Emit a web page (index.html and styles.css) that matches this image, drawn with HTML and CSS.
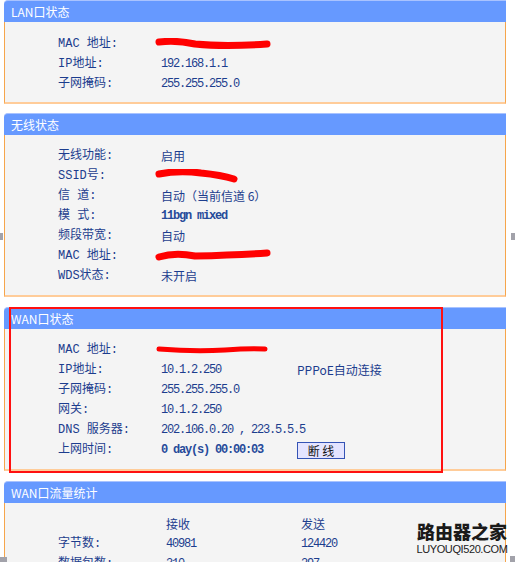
FILE: index.html
```html
<!DOCTYPE html>
<html lang="zh-CN">
<head>
    <meta charset="UTF-8">
    <meta name="viewport" content="width=device-width, initial-scale=1.0">
    <title>运行状态</title>
    <link rel="stylesheet" href="styles.css">
</head>
<body>

<div class="page">

    <div class="panel panel-lan">
        <div class="panel-title">LAN口状态</div>
        <div class="panel-body">
            <div class="row">
                <span class="lbl">MAC 地址:</span>
                <span class="val"><svg class="redact" width="118" height="12" viewBox="0 0 118 12"><path d="M4 4 Q22 2 40 6 Q70 9 112 6" /></svg></span>
            </div>
            <div class="row">
                <span class="lbl">IP地址:</span>
                <span class="val num">192.168.1.1</span>
            </div>
            <div class="row">
                <span class="lbl">子网掩码:</span>
                <span class="val num">255.255.255.0</span>
            </div>
        </div>
    </div>

    <div class="panel panel-wlan">
        <div class="panel-title">无线状态</div>
        <div class="panel-body">
            <div class="row">
                <span class="lbl">无线功能:</span>
                <span class="val">启用</span>
            </div>
            <div class="row">
                <span class="lbl">SSID号:</span>
                <span class="val"><svg class="redact" width="84" height="14" viewBox="0 0 84 14"><path d="M4 5 Q24 1 46 4 Q66 6 79 10" /></svg></span>
            </div>
            <div class="row">
                <span class="lbl">信 道:</span>
                <span class="val">自动（当前信道 6）</span>
            </div>
            <div class="row">
                <span class="lbl">模 式:</span>
                <span class="val num mode">11bgn mixed</span>
            </div>
            <div class="row">
                <span class="lbl">频段带宽:</span>
                <span class="val">自动</span>
            </div>
            <div class="row">
                <span class="lbl">MAC 地址:</span>
                <span class="val"><svg class="redact" width="118" height="14" viewBox="0 0 118 14"><path d="M4 8 Q20 3 40 7 Q80 6 112 4" /></svg></span>
            </div>
            <div class="row">
                <span class="lbl">WDS状态:</span>
                <span class="val">未开启</span>
            </div>
        </div>
    </div>

    <div class="panel panel-wan">
        <div class="panel-title">WAN口状态</div>
        <div class="panel-body">
            <div class="row">
                <span class="lbl">MAC 地址:</span>
                <span class="val"><svg class="redact thin" width="116" height="10" viewBox="0 0 116 10"><path d="M4 4 Q40 7 70 5 Q95 3 110 4" /></svg></span>
            </div>
            <div class="row">
                <span class="lbl">IP地址:</span>
                <span class="val num">10.1.2.250</span>
                <span class="extra">PPPoE自动连接</span>
            </div>
            <div class="row">
                <span class="lbl">子网掩码:</span>
                <span class="val num">255.255.255.0</span>
            </div>
            <div class="row">
                <span class="lbl">网关:</span>
                <span class="val num">10.1.2.250</span>
            </div>
            <div class="row">
                <span class="lbl">DNS 服务器:</span>
                <span class="val num wide">202.106.0.20 , 223.5.5.5</span>
            </div>
            <div class="row">
                <span class="lbl">上网时间:</span>
                <span class="val num mode">0 day(s) 00:00:03</span>
                <span class="extra"><button class="btn">断 线</button></span>
            </div>
        </div>
        <div class="highlight"></div>
    </div>

    <div class="panel panel-stats">
        <div class="panel-title">WAN口流量统计</div>
        <div class="panel-body">
            <div class="stat-row">
                <span class="lbl"></span>
                <span class="head">接收</span>
                <span class="head">发送</span>
            </div>
            <div class="stat-row">
                <span class="lbl">字节数:</span>
                <span class="num">40981</span>
                <span class="num">124420</span>
            </div>
            <div class="stat-row">
                <span class="lbl">数据包数:</span>
                <span class="num">310</span>
                <span class="num">297</span>
            </div>
        </div>
    </div>

    <div class="watermark">
        <div class="wm-cn">路由器之家</div>
        <div class="wm-en">LUYOUQI520.COM</div>
    </div>

    <span class="scroll-mark mark-left"></span>
    <span class="scroll-mark mark-right"></span>
    <span class="scroll-mark mark-bl"></span>
    <span class="scroll-mark mark-br"></span>
</div>

</body>
</html>
```

FILE: styles.css
```css
html, body {
    margin: 0;
    height: 100%;
    overflow: hidden;
}

body {
    font-family: "Liberation Mono", "Noto Sans CJK SC", monospace;
    font-size: 12px;
    color: #1c3d8e;
    background-color: #ffffff;
}

.page {
    position: relative;
    height: 562px;
    padding: 0 9px 0 4px;
}

.panel {
    margin-bottom: 10px;
}

.panel-lan {
    margin-bottom: 9px;
}

.panel-title {
    height: 21px;
    line-height: 21px;
    border-top: 1px solid #a9c3ff;
    border-top-left-radius: 4px;
    background-color: #6699ff;
    color: #ffffff;
    padding-left: 7px;
    font-family: "Noto Sans CJK SC", sans-serif;
    font-size: 12px;
}

.panel-body {
    background-color: #f4f4f4;
    border-left: 1px solid #f6a54b;
    border-right: 1px solid #f6a54b;
    border-bottom: 2px solid #ffcc99;
    padding: 11px 0 9px 53px;
}

.panel-lan .panel-body {
    padding: 12px 0 8px 53px;
}

.row {
    display: grid;
    grid-template-columns: 103px 136px auto;
    height: 20px;
    line-height: 20px;
    align-items: center;
}

.lbl {
    font-family: "Liberation Mono", "Noto Sans CJK SC", monospace;
    white-space: nowrap;
}

.val {
    white-space: nowrap;
    font-family: "Noto Sans CJK SC", sans-serif;
}

.num {
    font-family: "Liberation Mono", monospace;
    letter-spacing: -1.2px;
    white-space: nowrap;
}

.mode {
    font-weight: bold;
    color: #264a9a;
}

.extra {
    font-family: "Noto Sans CJK SC", sans-serif;
    white-space: nowrap;
}

/* red scribbles over the hidden MAC / SSID values */
.redact {
    display: block;
    margin-left: -6px;
}

.redact path {
    fill: none;
    stroke: #ff0000;
    stroke-width: 7;
    stroke-linecap: round;
}

.redact.thin path {
    stroke-width: 5;
}

.btn {
    display: block;
    width: 48px;
    height: 17px;
    padding: 0;
    margin-top: 1px;
    background-color: #e4e4ff;
    border: 1px solid #3453b5;
    color: #111111;
    font-family: "Noto Sans CJK SC", sans-serif;
    font-size: 12px;
    line-height: 15px;
}

.panel-wan {
    position: relative;
}

.highlight {
    position: absolute;
    left: 5px;
    top: 0;
    width: 430px;
    height: 162px;
    border: 2px solid #ff1010;
}

.stat-row {
    display: grid;
    grid-template-columns: 108px 135px auto;
    height: 20px;
    line-height: 20px;
}

.head {
    font-family: "Noto Sans CJK SC", sans-serif;
}

.watermark {
    position: absolute;
    left: 414px;
    top: 520px;
    width: 96px;
    text-align: center;
}

.wm-cn {
    font-family: "Noto Sans CJK SC", sans-serif;
    font-weight: 900;
    font-size: 18px;
    line-height: 22px;
    color: #1a1a1a;
}

.wm-en {
    font-family: "Liberation Sans", sans-serif;
    font-size: 11px;
    line-height: 13px;
    margin-top: 1px;
    letter-spacing: -0.4px;
    color: #222222;
}

.scroll-mark {
    position: absolute;
    background-color: #a2a2aa;
}

.mark-left {
    left: 0;
    top: 233px;
    width: 3px;
    height: 7px;
}

.mark-right {
    right: 0;
    top: 233px;
    width: 4px;
    height: 7px;
}

.mark-bl {
    left: 0;
    top: 557px;
    width: 7px;
    height: 5px;
}

.mark-br {
    right: 0;
    top: 556px;
    width: 5px;
    height: 6px;
}
```
